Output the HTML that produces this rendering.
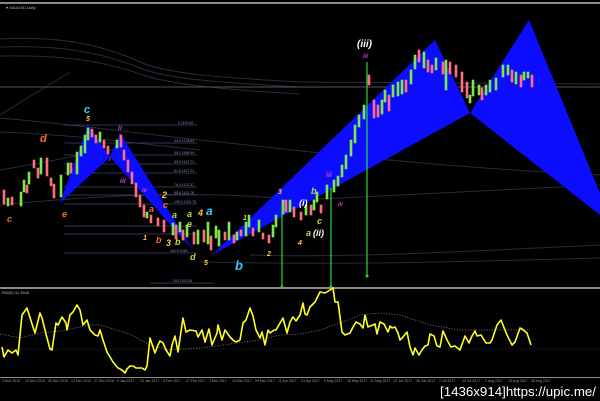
<!DOCTYPE html>
<html><head><meta charset="utf-8"><style>
html,body{margin:0;padding:0;background:#000;width:600px;height:401px;overflow:hidden}
svg{display:block}
text{font-family:"Liberation Sans",sans-serif}
.l{font-style:italic;font-weight:bold;font-size:9px}
.f{font-size:3.5px;fill:#8890b0}
</style></head><body>
<svg width="600" height="401" viewBox="0 0 600 401" xmlns="http://www.w3.org/2000/svg">
<rect width="600" height="401" fill="#000"/>
<rect x="0" y="2" width="600" height="2" fill="#8a8a8a"/>
<text x="6" y="9" fill="#bbb" font-size="4">▾ XAUUSD,Daily</text>
<!-- faint envelope curves -->
<g fill="none" stroke="#2a2a3a" stroke-width="1">
<path d="M0,39 C60,36 100,44 140,62 C170,75 230,78 300,82 L600,84"/>
<path d="M0,47 C60,45 100,52 140,68 C170,80 230,83 300,87"/>
<path d="M0,56 C60,55 100,60 140,74 C170,85 230,90 300,94"/>
<path d="M0,118 C80,125 150,135 200,140 C300,150 400,165 600,175"/>
<path d="M0,132 C80,135 150,145 200,150"/>
<path d="M0,170 C60,160 100,150 130,148"/>
<path d="M0,205 C100,195 200,190 300,200 L600,185"/>
<path d="M250,255 C350,258 450,252 600,245"/>
<path d="M200,262 C350,265 450,262 600,258"/>
<path d="M0,115 L70,72"/>
</g>
<rect x="0" y="86.5" width="600" height="1" fill="#555"/>
<!-- fib lines -->
<g stroke="#3a4470" stroke-width="0.7">
<line x1="64" y1="125" x2="197" y2="125"/><line x1="64" y1="143" x2="197" y2="143"/>
<line x1="64" y1="155" x2="197" y2="155"/><line x1="64" y1="164" x2="197" y2="164"/>
<line x1="64" y1="173" x2="197" y2="173"/><line x1="64" y1="187" x2="197" y2="187"/>
<line x1="64" y1="195" x2="197" y2="195"/><line x1="64" y1="204" x2="197" y2="204"/>
<line x1="64" y1="226" x2="197" y2="226"/><line x1="64" y1="234" x2="197" y2="234"/>
<line x1="64" y1="253" x2="197" y2="253"/><line x1="150" y1="283" x2="215" y2="283"/>
</g>
<g class="f"><text x="178" y="124">0 1191.60</text><text x="174" y="142">23.6 1178.93</text><text x="174" y="154">38.2 1168.99</text><text x="174" y="163">50.0 1147.72</text><text x="174" y="172">61.8 1137.24</text><text x="174" y="186">76.4 1122.37</text><text x="174" y="194">88.6 1113.78</text><text x="174" y="203">100.0 1102.75</text><text x="170" y="252">161.8 1053</text><text x="173" y="282">200 1013.81</text></g>
<!-- blue patterns -->
<g fill="#0c0cff">
<polygon points="60,203 88,125 110,157"/>
<polygon points="110,157 120,133 193,250"/>
<polygon points="212,255 435,40 470,113"/>
<polygon points="470,113 529,20 600,193 600,215"/>
</g>
<!-- candles -->
<g id="c"></g>
<g stroke-width="0.6">
<g fill="#ff6f7f" stroke="#ff6f7f">
<rect x="3" y="190" width="2" height="14"/><rect x="11" y="197" width="2" height="8"/><rect x="26" y="185" width="2" height="8"/><rect x="33" y="160" width="2" height="8"/><rect x="37" y="168" width="2" height="10"/><rect x="46" y="158" width="2" height="18"/><rect x="50" y="178" width="2" height="8"/><rect x="53" y="184" width="2" height="14"/><rect x="70" y="163" width="2" height="10"/>
<rect x="91" y="129" width="2" height="8"/><rect x="95" y="135" width="2" height="8"/><rect x="103" y="140" width="2" height="8"/><rect x="107" y="146" width="2" height="8"/><rect x="120" y="135" width="2" height="12"/><rect x="123" y="150" width="2" height="10"/><rect x="127" y="160" width="2" height="12"/><rect x="131" y="172" width="2" height="12"/><rect x="135" y="183" width="2" height="14"/><rect x="139" y="195" width="2" height="12"/><rect x="143" y="205" width="2" height="12"/><rect x="150" y="215" width="2" height="8"/><rect x="157" y="218" width="2" height="8"/><rect x="163" y="220" width="2" height="12"/><rect x="175" y="225" width="2" height="14"/><rect x="182" y="230" width="2" height="10"/><rect x="193" y="232" width="2" height="12"/><rect x="203" y="230" width="2" height="12"/><rect x="210" y="236" width="2" height="14"/>
<rect x="224" y="232" width="2" height="8"/><rect x="233" y="235" width="2" height="8"/><rect x="240" y="230" width="2" height="6"/><rect x="252" y="228" width="2" height="8"/><rect x="262" y="233" width="2" height="6"/><rect x="268" y="235" width="2" height="8"/><rect x="285" y="200" width="2" height="12"/><rect x="293" y="207" width="2" height="10"/><rect x="300" y="212" width="2" height="8"/><rect x="310" y="205" width="2" height="10"/><rect x="320" y="205" width="2" height="8"/>
<rect x="368" y="75" width="2" height="10"/><rect x="373" y="100" width="2" height="18"/><rect x="377" y="105" width="2" height="12"/><rect x="388" y="95" width="2" height="16"/><rect x="405" y="80" width="2" height="12"/><rect x="418" y="50" width="2" height="12"/><rect x="427" y="60" width="2" height="12"/><rect x="431" y="65" width="2" height="8"/><rect x="442" y="62" width="2" height="12"/><rect x="449" y="62" width="2" height="12"/><rect x="455" y="65" width="2" height="12"/><rect x="461" y="72" width="2" height="20"/><rect x="466" y="82" width="2" height="16"/><rect x="481" y="88" width="2" height="12"/><rect x="511" y="70" width="2" height="12"/><rect x="520" y="75" width="2" height="12"/><rect x="531" y="75" width="2" height="12"/>
</g>
<g fill="#7ee84a" stroke="#7ee84a">
<rect x="7" y="198" width="2" height="8"/><rect x="20" y="192" width="2" height="14"/><rect x="23" y="180" width="2" height="12"/><rect x="28" y="172" width="2" height="12"/><rect x="40" y="158" width="2" height="16"/><rect x="60" y="175" width="2" height="22"/><rect x="67" y="163" width="2" height="12"/><rect x="76" y="152" width="2" height="22"/><rect x="80" y="146" width="2" height="10"/><rect x="84" y="135" width="2" height="18"/><rect x="87" y="128" width="2" height="12"/><rect x="99" y="132" width="2" height="10"/><rect x="116" y="140" width="2" height="8"/>
<rect x="146" y="212" width="2" height="6"/><rect x="172" y="223" width="2" height="12"/><rect x="179" y="222" width="2" height="10"/><rect x="186" y="225" width="2" height="12"/><rect x="197" y="230" width="2" height="14"/><rect x="207" y="222" width="2" height="22"/><rect x="215" y="226" width="2" height="12"/><rect x="218" y="230" width="2" height="16"/><rect x="228" y="222" width="2" height="18"/><rect x="236" y="232" width="2" height="8"/><rect x="245" y="222" width="2" height="14"/><rect x="248" y="215" width="2" height="12"/><rect x="258" y="220" width="2" height="12"/><rect x="272" y="225" width="2" height="12"/><rect x="275" y="215" width="2" height="12"/><rect x="282" y="200" width="2" height="14"/><rect x="289" y="200" width="2" height="12"/><rect x="305" y="205" width="2" height="10"/><rect x="313" y="200" width="2" height="10"/><rect x="316" y="192" width="2" height="10"/><rect x="326" y="185" width="2" height="14"/><rect x="333" y="180" width="2" height="12"/><rect x="337" y="176" width="2" height="10"/><rect x="341" y="165" width="2" height="12"/><rect x="345" y="155" width="2" height="14"/><rect x="350" y="140" width="2" height="16"/><rect x="354" y="125" width="2" height="18"/><rect x="358" y="115" width="2" height="12"/><rect x="363" y="105" width="2" height="14"/>
<rect x="381" y="100" width="2" height="14"/><rect x="384" y="90" width="2" height="12"/><rect x="392" y="85" width="2" height="12"/><rect x="397" y="82" width="2" height="14"/><rect x="401" y="80" width="2" height="14"/><rect x="410" y="70" width="2" height="14"/><rect x="414" y="55" width="2" height="14"/><rect x="423" y="52" width="2" height="16"/><rect x="435" y="58" width="2" height="12"/><rect x="445" y="60" width="2" height="30"/><rect x="469" y="95" width="2" height="8"/><rect x="472" y="80" width="2" height="16"/><rect x="478" y="85" width="2" height="10"/><rect x="485" y="85" width="2" height="10"/><rect x="489" y="80" width="2" height="12"/><rect x="495" y="78" width="2" height="12"/><rect x="502" y="65" width="2" height="12"/><rect x="507" y="65" width="2" height="10"/><rect x="515" y="72" width="2" height="12"/><rect x="523" y="72" width="2" height="8"/><rect x="527" y="72" width="2" height="6"/>
</g>
</g>
<!-- green vertical lines -->
<g stroke="#22dd33" stroke-width="1.2"><line x1="282" y1="205" x2="282" y2="288"/><line x1="331" y1="188" x2="331" y2="288"/><line x1="367" y1="62" x2="367" y2="276"/></g>
<g fill="#22dd33"><circle cx="282" cy="287" r="1.5"/><circle cx="331" cy="287" r="1.5"/><circle cx="367" cy="276" r="1.5"/></g>
<!-- labels -->
<g class="l">
<text x="84" y="113" fill="#33ccff" font-size="11">c</text><text x="86" y="121" fill="#ffcc33" font-size="7">5</text>
<text x="40" y="142" fill="#ff6a2a" font-size="11">d</text>
<text x="7" y="222" fill="#ff6a2a">c</text><text x="62" y="217" fill="#ff6a2a">e</text>
<text x="118" y="130" fill="#cc44cc" font-size="7">ii</text><text x="109" y="161" fill="#cc44cc" font-size="6">i</text>
<text x="120" y="183" fill="#cc44cc" font-size="7">iii</text><text x="142" y="192" fill="#cc44cc" font-size="6">iv</text>
<text x="162" y="198" fill="#ffcc33">2</text><text x="163" y="208" fill="#ff6a2a">c</text><text x="149" y="212" fill="#ff6a2a">a</text>
<text x="172" y="218" fill="#bbdd44">a</text><text x="187" y="217" fill="#bbdd44">a</text><text x="187" y="227" fill="#bbdd44">e</text>
<text x="198" y="216" fill="#ffcc33">4</text><text x="206" y="215" fill="#33ccff" font-size="12">a</text>
<text x="143" y="240" fill="#ffcc33" font-size="7">1</text><text x="156" y="243" fill="#ff6a2a">b</text><text x="166" y="246" fill="#ffcc33">3</text><text x="175" y="245" fill="#bbdd44">b</text>
<text x="190" y="260" fill="#bbdd44">d</text><text x="204" y="265" fill="#ffcc33" font-size="7">5</text>
<text x="243" y="220" fill="#ffcc33" font-size="7">1</text><text x="235" y="270" fill="#33ccff" font-size="13">b</text>
<text x="267" y="256" fill="#ffcc33" font-size="7">2</text><text x="278" y="194" fill="#ffcc33" font-size="7">3</text>
<text x="299" y="206" fill="#fff">(i)</text><text x="311" y="194" fill="#bbdd44">b</text><text x="298" y="245" fill="#ffcc33" font-size="7">4</text>
<text x="317" y="224" fill="#bbdd44">c</text><text x="306" y="236" fill="#bbdd44">a</text><text x="313" y="236" fill="#fff">(ii)</text>
<text x="326" y="177" fill="#cc44cc" font-size="7">iii</text><text x="338" y="206" fill="#cc44cc" font-size="6">iv</text>
<text x="357" y="47" fill="#fff" font-size="10">(iii)</text><text x="363" y="58" fill="#cc44cc" font-size="6">iii</text>
</g>
<!-- separator -->
<rect x="0" y="287" width="600" height="2" fill="#8a8a8a"/>
<text x="2" y="294" fill="#bbb" font-size="4">RSI(5) 41.3545</text>
<line x1="0" y1="349" x2="600" y2="349" stroke="#221818" stroke-width="0.6"/>
<polyline fill="none" stroke="#888" stroke-width="0.7" stroke-dasharray="1.2,1.5" points="0,334 20,338 40,333 60,331 90,325 100,325 130,334 150,345 170,350 200,348 230,344 260,340 280,335 300,334 320,330 340,323 360,315 380,313 400,315 430,325 460,330 490,330 510,330 530,330"/>
<polyline fill="none" stroke="#ffff22" stroke-width="1.6" stroke-linejoin="round" points="2,347 4,357 8,350 12,353 16,350 18,355 22,315 27,308 33,327 35,333 40,313 42,318 47,338 50,349 52,350 56,323 58,325 62,317 66,323 67,330 70,315 73,312 77,305 80,310 83,325 87,320 90,330 95,335 98,336 100,330 103,340 107,352 113,362 118,368 122,370 125,373 127,369 130,366 133,366 136,368 142,368 145,370 147,366 150,338 152,344 155,353 158,345 160,341 163,343 166,350 170,356 172,345 175,336 178,352 183,318 186,332 190,330 196,331 198,337 202,330 205,342 209,329 212,345 217,333 218,325 222,340 225,330 230,337 233,340 236,342 240,340 243,323 246,320 250,308 253,316 256,330 260,338 262,332 265,345 268,330 270,333 274,330 276,330 280,323 283,318 287,333 290,322 293,317 296,321 300,315 303,303 305,314 307,315 310,307 315,302 320,292 325,293 330,290 333,288 335,302 338,302 342,332 345,335 350,333 353,327 356,322 360,324 363,328 365,315 368,327 375,324 377,334 380,322 384,324 388,332 390,326 392,328 395,327 398,333 400,340 403,337 407,332 410,347 413,355 415,348 419,355 422,350 425,346 428,345 430,334 434,336 437,346 440,347 443,331 447,340 451,347 455,346 460,350 465,336 469,343 472,336 475,331 477,336 481,335 486,343 490,343 492,340 497,325 501,320 507,335 512,345 515,342 520,328 522,329 527,333 531,345"/>
<rect x="0" y="377" width="600" height="1" fill="#8a8a8a"/>
<g fill="#999" font-size="3.5">
<text x="2" y="382">3 Nov 2016</text><text x="25" y="382">16 Nov 2016</text><text x="48" y="382">30 Nov 2016</text><text x="71" y="382">13 Dec 2016</text><text x="94" y="382">27 Dec 2016</text><text x="117" y="382">9 Jan 2017</text><text x="140" y="382">23 Jan 2017</text><text x="163" y="382">3 Feb 2017</text><text x="186" y="382">17 Feb 2017</text><text x="209" y="382">3 Mar 2017</text><text x="232" y="382">16 Mar 2017</text><text x="255" y="382">29 Mar 2017</text><text x="278" y="382">11 Apr 2017</text><text x="301" y="382">24 Apr 2017</text><text x="324" y="382">5 May 2017</text><text x="347" y="382">18 May 2017</text><text x="370" y="382">31 May 2017</text><text x="393" y="382">13 Jun 2017</text><text x="416" y="382">26 Jun 2017</text><text x="439" y="382">7 Jul 2017</text><text x="462" y="382">20 Jul 2017</text><text x="485" y="382">2 Aug 2017</text><text x="508" y="382">15 Aug 2017</text><text x="531" y="382">28 Aug 2017</text>
</g>
<text x="440" y="396" fill="#fff" font-size="12.5" font-family="Liberation Sans Narrow, Liberation Sans, sans-serif" textLength="156" lengthAdjust="spacingAndGlyphs">[1436x914]https://upic.me/</text>
</svg>
</body></html>
